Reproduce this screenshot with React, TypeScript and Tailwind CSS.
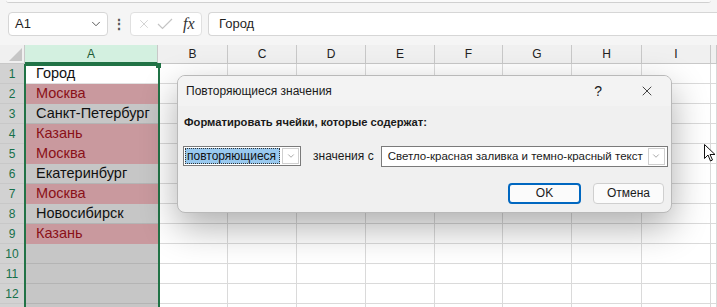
import { ChevronDown, X } from "lucide-react"

const cols = ["A", "B", "C", "D", "E", "F", "G", "H", "I", ""]

type Cell = { text: string; dup?: boolean }

const cells: Cell[] = [
  { text: "Город" },
  { text: "Москва", dup: true },
  { text: "Санкт-Петербург" },
  { text: "Казань", dup: true },
  { text: "Москва", dup: true },
  { text: "Екатеринбург" },
  { text: "Москва", dup: true },
  { text: "Новосибирск" },
  { text: "Казань", dup: true },
  { text: "" },
  { text: "" },
  { text: "" },
  { text: "" },
]

function FormulaBar() {
  return (
    <div className="flex h-[41px] items-start bg-[#f5f5f5] pt-[8px] pl-[8px] font-['Liberation_Sans',Arial,sans-serif]">
      <div className="flex h-[24px] w-[100px] items-center justify-between rounded-[4px] border border-[#d6d6d6] bg-white pl-[6px] pr-[4px] text-[13px] text-[#1f1f1f]">
        <span>A1</span>
        <ChevronDown className="h-[14px] w-[14px] text-[#444]" strokeWidth={1.5} />
      </div>
      <div className="flex h-[24px] w-[22px] items-center justify-center text-[14px] font-bold text-[#555]">⋮</div>
      <div className="flex h-[24px] w-[72px] items-center gap-[6px] rounded-[4px] border border-[#e0e0e0] bg-white pl-[6px]">
        <X className="h-[14px] w-[14px] text-[#c4c4c4]" strokeWidth={1.25} />
        <svg width="16" height="14" viewBox="0 0 16 14" fill="none" stroke="#c4c4c4" strokeWidth="1.2">
          <path d="M1 7 L5.5 11.5 L15 2" />
        </svg>
        <span className="ml-[4px] font-['Liberation_Serif',serif] text-[16px] italic text-[#333]">fx</span>
      </div>
      <div className="ml-[6px] flex h-[24px] flex-1 items-center rounded-l-[4px] border border-r-0 border-[#d6d6d6] bg-white pl-[10px] text-[13px] text-[#1f1f1f]">
        Город
      </div>
    </div>
  )
}

function Grid() {
  return (
    <div className="grid grid-cols-[25px_133px_70px_69px_69px_69px_68px_69px_70px_69px_1fr] bg-white">
      <div className="relative h-[19px] border-r border-b border-[#c8c8c8] bg-[#f0f0f0]">
        <svg className="absolute right-[2px] bottom-[2px]" width="13" height="13" viewBox="0 0 13 13">
          <path d="M13 0 L13 13 L0 13 Z" fill="#c6c6c6" />
        </svg>
      </div>
      {cols.map((c, i) => (
        <div
          key={i}
          className={
            i === 0
              ? "flex h-[19px] items-center justify-center border-r border-b-2 border-r-[#c8c8c8] border-b-[#217346] bg-[#d3f0e0] text-[12px] text-[#1d5a36]"
              : "flex h-[19px] items-center justify-center border-r border-b border-[#c8c8c8] bg-[#f0f0f0] text-[12px] text-[#222]"
          }
        >
          {c}
        </div>
      ))}
      {cells.map((cell, r) => (
        <Row key={r} n={r + 1} cell={cell} />
      ))}
    </div>
  )
}

function Row({ n, cell }: { n: number; cell: Cell }) {
  let bg = "bg-[#c6c6c6] border-[#b4b4b4]"
  if (n === 1) bg = "bg-white border-[#e1e1e1]"
  else if (cell.dup) bg = "bg-[#c9999e] border-[#c9999e]"
  return (
    <>
      <div className="flex h-[20px] items-center justify-center border-r border-b border-[#c8c8c8] bg-[#d2d2d2] text-[12px] text-[#16704a]">
        {n < 13 ? n : ""}
      </div>
      <div
        className={`flex h-[20px] items-center border-b pt-[1px] pl-[11px] font-['Liberation_Sans',Arial,sans-serif] text-[14.5px] ${bg} ${
          cell.dup ? "text-[#8a1018]" : "text-[#111]"
        }`}
      >
        {cell.text}
      </div>
      {cols.slice(1).map((_, i) => (
        <div key={i} className="h-[20px] border-r border-b border-[#dadada]" />
      ))}
    </>
  )
}

function Dialog() {
  return (
    <div className="absolute top-[75px] left-[177px] w-[495px] overflow-hidden rounded-[8px] border border-[#b9b9b9] bg-[#f0f0f0] font-['Liberation_Sans',Arial,sans-serif] text-[12px] whitespace-nowrap text-[#1a1a1a] shadow-[0_14px_36px_rgba(0,0,0,0.32)]">
      <div className="flex h-[30px] items-center bg-[#f3f3f3] pl-[8px]">
        <span className="flex-1">Повторяющиеся значения</span>
        <span className="mr-[37px] text-[14px]">?</span>
        <X className="mr-[16px] h-[16px] w-[16px] text-[#222]" strokeWidth={1.25} />
      </div>
      <div className="pl-[6px] pt-[8px] text-[11.2px] font-bold">Форматировать ячейки, которые содержат:</div>
      <div className="mt-[15px] flex items-center pl-[5px]">
        <div className="flex h-[20px] w-[118px] items-center border border-[#7a7a7a] bg-white pl-[1px] pr-[1px]">
          <div className="flex h-[16px] flex-1 items-center border border-dotted border-[#333] bg-[#99c9ef] pl-[1px] text-[#111]">
            повторяющиеся
          </div>
          <div className="ml-[2px] flex h-[16px] w-[17px] items-center justify-center border border-[#cfcfcf] bg-white">
            <ChevronDown className="h-[10px] w-[10px] text-[#777]" strokeWidth={1.5} />
          </div>
        </div>
        <span className="ml-[12px]">значения с</span>
        <div className="ml-[7px] flex h-[21px] w-[287px] items-center border border-[#7a7a7a] bg-white pl-[6px] pr-[2px]">
          <span className="flex-1 text-[11.5px]">Светло-красная заливка и темно-красный текст</span>
          <div className="flex h-[17px] w-[17px] items-center justify-center border border-[#cfcfcf] bg-white">
            <ChevronDown className="h-[10px] w-[10px] text-[#777]" strokeWidth={1.5} />
          </div>
        </div>
      </div>
      <div className="mt-[16px] mb-[8px] flex justify-end gap-[12px] pr-[7px]">
        <div className="flex h-[21px] w-[73px] items-center justify-center rounded-[4px] border-2 border-[#0067c0] bg-[#fbfbfb]">
          OK
        </div>
        <div className="flex h-[21px] w-[71px] items-center justify-center rounded-[4px] border border-[#cfcfcf] bg-[#fbfbfb]">
          Отмена
        </div>
      </div>
    </div>
  )
}

export default function App() {
  return (
    <div className="relative h-[307px] w-[717px] overflow-hidden bg-white font-['Liberation_Sans',Arial,sans-serif]">
      <div className="h-[4px] bg-[#f5f5f5]">
        <div className="mx-[6px] h-[3px] rounded-b-[6px] border-b border-[#d0d0d0] bg-[#fafafa]" />
      </div>
      <FormulaBar />
      <Grid />
      {/* selection */}
      <div className="pointer-events-none absolute top-[64px] left-[24px] h-[260px] w-[136px] border-2 border-[#217346]" />
      <div className="absolute top-[63px] left-[156px] h-[5px] w-[5px] bg-[#217346]" />
      <Dialog />
      <svg className="absolute top-[144px] left-[704px]" width="12" height="18" viewBox="0 0 12 18">
        <path d="M0.5 0.5 L0.5 14.5 L4 11 L6.5 17 L8.5 16 L6 10.5 L11 10.5 Z" fill="white" stroke="#111" strokeWidth="1" />
      </svg>
    </div>
  )
}
